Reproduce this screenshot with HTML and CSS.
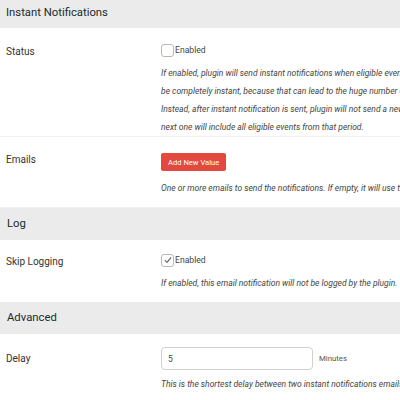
FILE: index.html
```html
<!DOCTYPE html>
<html lang="en">
<head>
    <meta charset="UTF-8">
    <title>Instant Notifications</title>
    <link rel="stylesheet" href="styles.css">
</head>
<body>
    <div class="settings">
        <h2 class="section-title section-first">Instant Notifications</h2>

        <div class="row row-status">
            <div class="label">Status</div>
            <div class="field">
                <label class="check"><span class="box"></span> Enabled</label>
                <p class="desc">If enabled, plugin will send instant notifications when eligible events occur. It can't<br>be completely instant, because that can lead to the huge number of emails being sent.<br>Instead, after instant notification is sent, plugin will not send a new one for a while, and<br>next one will include all eligible events from that period.</p>
            </div>
        </div>

        <div class="row">
            <div class="label">Emails</div>
            <div class="field">
                <button class="btn-add">Add New Value</button>
                <p class="desc desc-emails">One or more emails to send the notifications. If empty, it will use the admin email.</p>
            </div>
        </div>

        <h2 class="section-title">Log</h2>

        <div class="row row-log">
            <div class="label">Skip Logging</div>
            <div class="field">
                <label class="check"><span class="box checked"><svg viewBox="0 0 12 12" width="10" height="10"><path d="M2.2 6.2 L4.8 8.8 L9.8 2.8" fill="none" stroke="#6b6b6b" stroke-width="1.5"/></svg></span> Enabled</label>
                <p class="desc">If enabled, this email notification will not be logged by the plugin.</p>
            </div>
        </div>

        <h2 class="section-title">Advanced</h2>

        <div class="row row-delay">
            <div class="label">Delay</div>
            <div class="field">
                <div class="inline">
                    <input class="text-input" type="text" value="5">
                    <span class="unit">Minutes</span>
                </div>
                <p class="desc">This is the shortest delay between two instant notifications emails.</p>
            </div>
        </div>
    </div>
</body>
</html>
```

FILE: styles.css
```css
body {
    margin: 0;
    background: #fff;
    color: #333;
    font-family: Roboto, "Open Sans", sans-serif;
    overflow: hidden;
}

.settings {
    width: 620px;
}

.section-title {
    margin: 0;
    padding: 0 7px;
    height: 32px;
    line-height: 32px;
    font-size: 11.3px;
    font-weight: normal;
    background: #ebebeb;
    color: #23282d;
}

.section-first {
    height: 28px;
    line-height: 26px;
    padding-left: 6px;
}

.row {
    display: grid;
    grid-template-columns: 155px 1fr;
    padding: 12px 6px 10px;
    border-bottom: 1px solid #f0f0f0;
}

.row-status {
    padding-top: 13px;
    padding-bottom: 0;
}

.row-log {
    padding-top: 11px;
    border-bottom: none;
}

.row-delay {
    padding-top: 13px;
    border-bottom: none;
}

.label {
    padding-top: 2px;
    font-size: 10px;
    line-height: 18px;
}

.row-delay .label {
    padding-top: 3px;
}

.check {
    display: flex;
    align-items: center;
    height: 18px;
    font-size: 8.6px;
    color: #444;
}

.box {
    display: inline-flex;
    align-items: center;
    justify-content: center;
    width: 11px;
    height: 11px;
    border: 1px solid #b4b9be;
    border-radius: 3px;
    margin-right: 1px;
    background: #fff;
}

.desc {
    margin: 5px 0 0;
    font-size: 8.5px;
    line-height: 18px;
    font-style: italic;
    color: #444;
    white-space: nowrap;
}

.desc-emails {
    margin-top: 8px;
}

.btn-add {
    display: block;
    margin-top: 4px;
    height: 18px;
    padding: 0 7px;
    border: none;
    border-radius: 2px;
    background: #e2493f;
    color: #fff;
    font-family: inherit;
    font-size: 7.6px;
}

.inline {
    display: flex;
    align-items: center;
}

.text-input {
    box-sizing: border-box;
    width: 152px;
    height: 23px;
    padding: 0 6px;
    border: 1px solid #d0d0d0;
    border-radius: 4px;
    font-family: inherit;
    font-size: 8.5px;
    color: #444;
}

.unit {
    margin-left: 6px;
    font-size: 7.8px;
    color: #555;
}
```
